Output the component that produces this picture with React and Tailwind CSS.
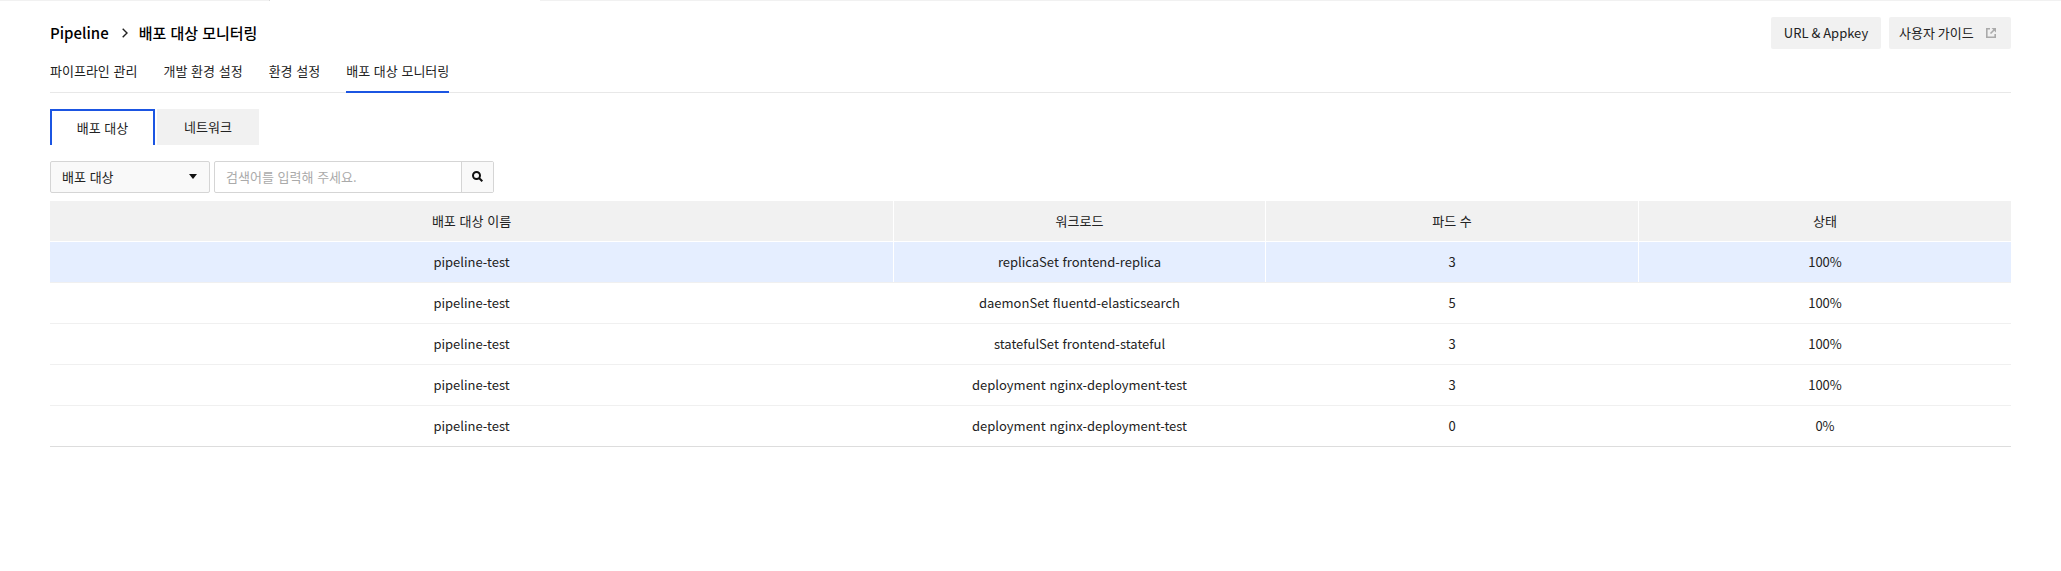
const tabs = ['파이프라인 관리', '개발 환경 설정', '환경 설정', '배포 대상 모니터링'];
const headers = ['배포 대상 이름', '워크로드', '파드 수', '상태'];
const rows = [
  ['pipeline-test', 'replicaSet frontend-replica', '3', '100%'],
  ['pipeline-test', 'daemonSet fluentd-elasticsearch', '5', '100%'],
  ['pipeline-test', 'statefulSet frontend-stateful', '3', '100%'],
  ['pipeline-test', 'deployment nginx-deployment-test', '3', '100%'],
  ['pipeline-test', 'deployment nginx-deployment-test', '0', '0%'],
];

function Row({ cells, className, divider }) {
  return (
    <div className={`grid h-[41px] grid-cols-[844px_372px_373px_372px] border-b ${className}`}>
      {cells.map((c, i) => (
        <div key={i} className={`flex items-center justify-center pb-px ${i < 3 && divider ? 'border-r border-white' : ''} ${i < 3 && !divider ? 'pr-px' : ''}`}>
          {c}
        </div>
      ))}
    </div>
  );
}

export default function App() {
  return (
    <div className="h-[571px] w-[2061px] overflow-hidden bg-white font-['Noto_Sans_CJK_KR',sans-serif] text-[13px] leading-5 [word-spacing:0.8px] text-[#222]">
      <div className="flex h-px justify-between">
        <div className="w-[270px] border-r border-[#d9d9d9] bg-[#f1f1f1]" />
        <div className="w-[1521px] bg-[#f1f1f1]" />
      </div>
      <div className="px-[50px] pt-4">
        <header className="flex h-8 items-center justify-between">
          <div className="flex items-center text-[15px] font-medium text-black">
            <span>Pipeline</span>
            <svg className="mr-[11px] ml-[13px] h-[10px] w-[6px]" viewBox="0 0 6 10" fill="none" stroke="#222" strokeWidth="1.4">
              <path d="M.7.7 5 5 .7 9.3" />
            </svg>
            <span>배포 대상 모니터링</span>
          </div>
          <div className="flex gap-2">
            <button className="h-8 w-[110px] rounded-xs bg-[#f1f1f1]">URL &amp; Appkey</button>
            <button className="flex h-8 w-[122px] items-center rounded-xs bg-[#f1f1f1] pl-2.5">
              사용자 가이드
              <svg className="ml-3 size-[10px]" viewBox="0 0 10 10" fill="none" stroke="#aaa" strokeWidth="1.6">
                <path d="M4 .8H.8v8.4h8.4V6" />
                <path d="M9 1 4.5 5.5" />
                <path d="M5.5 0H10v4.5z" fill="#aaa" stroke="none" />
              </svg>
            </button>
          </div>
        </header>
        <nav className="flex h-11 gap-[26px] border-b border-[#e8e8e8]">
          {tabs.map((t, i) => (
            <a key={t} className={`h-11 pt-3 ${i === 3 ? 'border-b-2 border-[#1b55e2]' : ''}`}>{t}</a>
          ))}
        </nav>
        <div className="mt-4 flex h-9 gap-0.5">
          <div className="flex w-[105px] items-center justify-center border-2 border-b-0 border-[#1b55e2]">배포 대상</div>
          <div className="flex w-[102px] items-center justify-center bg-[#f1f1f1]">네트워크</div>
        </div>
        <div className="mt-4 flex h-8 gap-1">
          <div className="flex w-40 items-center justify-between rounded-xs border border-[#d5d5d5] bg-[#f9f9f9] pr-3 pb-px pl-[11px]">
            배포 대상
            <svg className="h-[5px] w-2" viewBox="0 0 8 5" fill="#111"><path d="M0 0h8L4 5z" /></svg>
          </div>
          <div className="flex w-[280px] rounded-xs border border-[#d5d5d5]">
            <span className="flex w-[246px] items-center pl-[11px] text-[#aaa]">검색어를 입력해 주세요.</span>
            <span className="flex flex-1 items-center justify-center border-l border-[#d5d5d5] bg-[#f9f9f9] pb-px">
              <svg className="size-[11px]" viewBox="0 0 11 11" fill="none" stroke="#111" strokeWidth="2">
                <circle cx="4.5" cy="4.5" r="3.5" /><path d="m7 7 3.3 3.3" />
              </svg>
            </span>
          </div>
        </div>
        <div className="mt-2">
          <Row cells={headers} divider className="border-white bg-[#f1f1f1]" />
          <div>
            {rows.map((r, i) => (
              <Row key={i} cells={r} divider={i === 0} className={i === 0 ? 'border-[#f0f0f0] bg-[#e5eeff]' : i === 4 ? 'border-[#ddd]' : 'border-[#f0f0f0]'} />
            ))}
          </div>
        </div>
      </div>
    </div>
  );
}
